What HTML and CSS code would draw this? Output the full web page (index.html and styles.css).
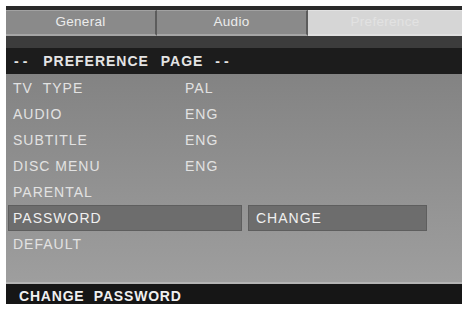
FILE: index.html
```html
<!DOCTYPE html>
<html lang="en">
  <head>
    <meta charset="UTF-8" />
    <meta name="viewport" content="width=device-width, initial-scale=1.0" />
    <title>DVD Setup - Preference Page</title>
    <link rel="stylesheet" href="styles.css">
  </head>
  <body>
    <div class="screen">
      <div class="tabs">
        <div class="tab">General</div>
        <div class="tab">Audio</div>
        <div class="tab active">Preference</div>
      </div>
      <div class="gap"></div>
      <div class="title"><span class="dash">--</span> PREFERENCE PAGE <span class="dash">--</span></div>
      <div class="menu">
        <div class="row"><span class="label">TV &nbsp;TYPE</span><span class="value">PAL</span></div>
        <div class="row"><span class="label">AUDIO</span><span class="value">ENG</span></div>
        <div class="row"><span class="label">SUBTITLE</span><span class="value">ENG</span></div>
        <div class="row"><span class="label">DISC MENU</span><span class="value">ENG</span></div>
        <div class="row"><span class="label">PARENTAL</span></div>
        <div class="row selected">
          <span class="box main">PASSWORD</span>
          <span class="box option">CHANGE</span>
        </div>
        <div class="row"><span class="label">DEFAULT</span></div>
      </div>
      <div class="status">CHANGE &nbsp;PASSWORD</div>
    </div>
  </body>
</html>
```

FILE: styles.css
```css
* {
  margin: 0;
  padding: 0;
  box-sizing: border-box;
}
body {
  background-color: #fff;
  font-family: "Liberation Sans", Arial, sans-serif;
}
.screen {
  margin-top: 6px;
  margin-left: 6px;
  width: 456px;
  height: 298px;
  background-color: #2a2a2a;
  padding-top: 4px;
  display: flex;
  flex-direction: column;
}
.tabs {
  display: flex;
  height: 26px;
}
.tab {
  width: 151px;
  background-color: #8a8a8a;
  border-top: 1px solid #a2a2a2;
  border-bottom: 2px solid #a6a6a6;
  border-right: 2px solid #5c5c5c;
  color: #ececec;
  font-size: 13.5px;
  letter-spacing: 0.3px;
  text-align: center;
  line-height: 22px;
}
.tab.active {
  flex: 1;
  border-right: none;
  background-color: #d6d6d6;
  border-top-color: #e2e2e2;
  border-bottom-color: #e0e0e0;
  color: #e2e2e2;
}
.gap {
  height: 12px;
  background-color: #3c3c3c;
}
.title {
  height: 26px;
  background-color: #1c1c1c;
  color: #e4e4e4;
  font-size: 14px;
  font-weight: 700;
  letter-spacing: 1px;
  word-spacing: 7px;
  line-height: 27px;
  padding-left: 8px;
}
.dash {
  letter-spacing: 4px;
}
.menu {
  flex: 1;
  background: linear-gradient(to bottom, #838383, #9e9e9e);
  border-bottom: 2px solid #b4b4b4;
  padding-top: 1px;
}
.row {
  display: flex;
  height: 26px;
  align-items: center;
  color: #e2e2e2;
  font-size: 14px;
  letter-spacing: 1px;
}
.label {
  width: 179px;
  padding-left: 7px;
}
.row.selected {
  padding-left: 2px;
}
.box {
  height: 26px;
  line-height: 25px;
  background-color: #6d6d6d;
  border: 1px solid #5e5e5e;
  color: #f0f0f0;
}
.box.main {
  width: 234px;
  padding-left: 4px;
}
.box.option {
  width: 179px;
  margin-left: 6px;
  padding-left: 7px;
}
.status {
  height: 20px;
  background-color: #161616;
  color: #f0f0f0;
  font-size: 14px;
  font-weight: 700;
  letter-spacing: 0.8px;
  line-height: 25px;
  padding-left: 13px;
  overflow: hidden;
}
```
